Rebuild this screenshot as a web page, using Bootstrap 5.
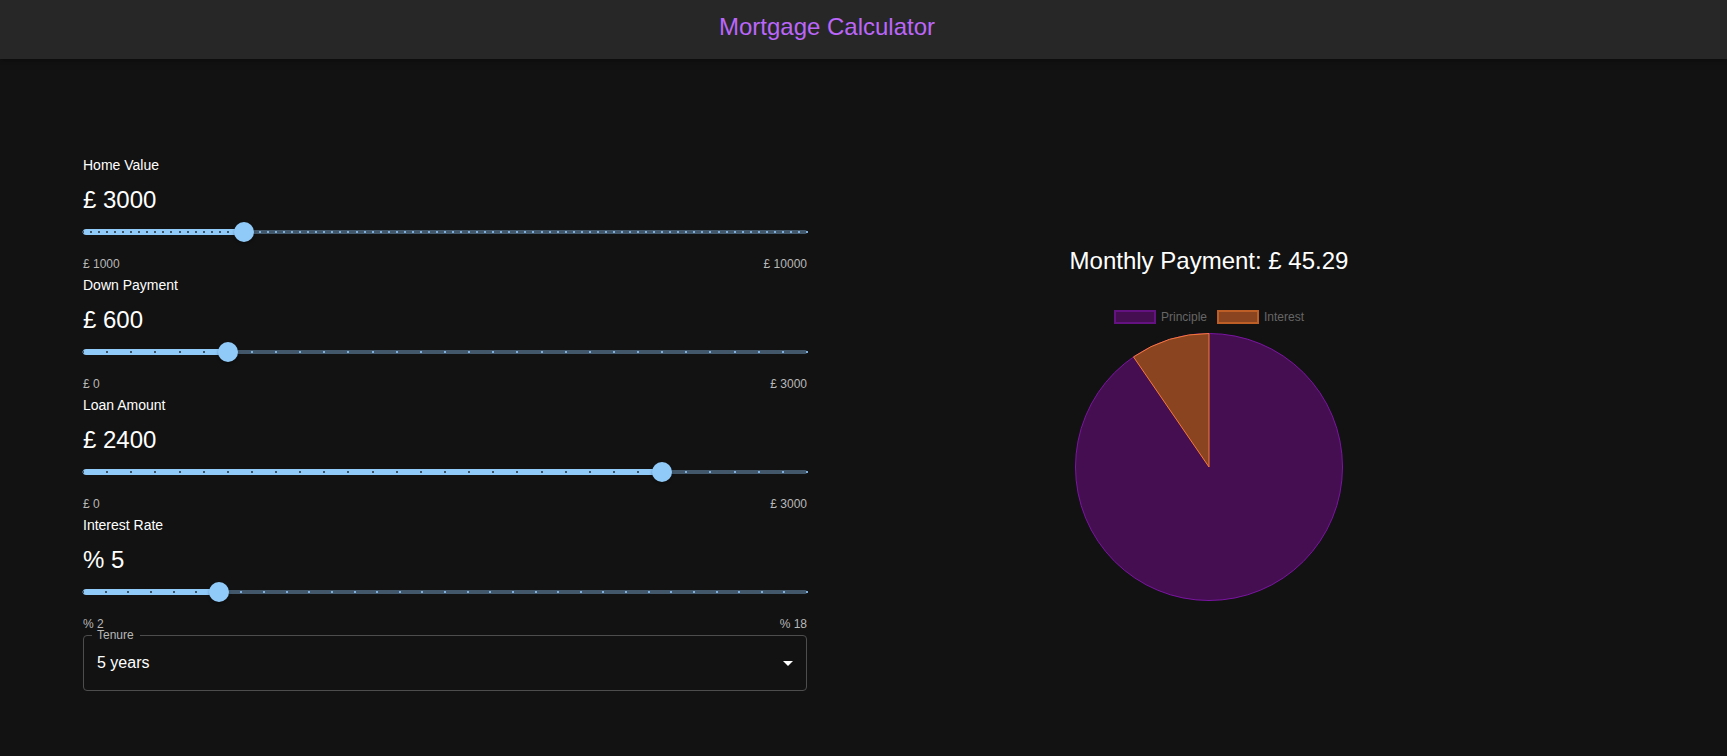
<!DOCTYPE html>
<html lang="en" data-bs-theme="dark">
<head>
<meta charset="utf-8">
<meta name="viewport" content="width=device-width, initial-scale=1">
<title>Mortgage Calculator</title>
<link href="https://cdn.jsdelivr.net/npm/bootstrap@5.3.0/dist/css/bootstrap.min.css" rel="stylesheet">
<style>
  :root { --accent: #90caf9; --page: #121212; --edge: 73px; }
  body { background: var(--page); color: #fff; font-family: "Liberation Sans", Arial, sans-serif; }
  .topbar { background: #272727; padding: 11px 0 16px; box-shadow: 0 2px 4px rgba(0,0,0,.2), 0 4px 8px rgba(0,0,0,.1); }
  .topbar h1 { color: #bb66f9; }
  .big-text { font-size: 24px; line-height: 32px; font-weight: 400; margin: 0; }
  .page-inner { max-width: 1536px; padding: 0 24px; margin: 0 auto; }
  .calc { padding-top: 95px; padding-bottom: 66px; }
  .field-name { font-size: 14px; line-height: 22px; margin-bottom: 8px; display: block; }
  .limits { font-size: 12px; line-height: 20px; margin-top: 6px; color: #b8b8b8; }
  .big-text output { display: inline; }

  .slider { position: relative; height: 32px; }
  .slider .rail, .slider .fill { position: absolute; left: 0; top: 50%; transform: translateY(-50%); border-radius: 12px; }
  .slider .rail { width: 100%; height: 4px; background: var(--accent); opacity: .38; }
  .slider .fill { height: 6px; background: var(--accent); }
  .slider .tick { position: absolute; top: 15px; width: 2px; height: 2px; margin-left: -1px; background: #7faedb; }
  .slider .tick.on { background: #3f5465; }
  .slider input { position: absolute; top: 0; left: -10px; width: calc(100% + 20px); height: 32px; margin: 0; background: transparent; -webkit-appearance: none; appearance: none; }
  .slider input::-webkit-slider-runnable-track { height: 20px; background: transparent; }
  .slider input::-webkit-slider-thumb { -webkit-appearance: none; width: 20px; height: 20px; border-radius: 50%; background: var(--accent); box-shadow: 0 2px 3px rgba(0,0,0,.3); }
  .slider input::-moz-range-thumb { width: 20px; height: 20px; border: 0; border-radius: 50%; background: var(--accent); }

  .tenure { position: relative; padding-top: 1px; }
  /* Only a thin strip of the label is opaque, to cut the notch in the outline */
  .tenure label { position: absolute; left: 9px; top: -8px; padding: 0 6px 0 5px; background: linear-gradient(var(--page), var(--page)) 0 8px / 100% 3px no-repeat; font-size: 12px; line-height: 18px; color: #b8b8b8; }
  .tenure select { appearance: none; width: 100%; height: 56px; padding: 0 32px 0 13px; font-size: 16px; color: #fff; background: transparent; border: 1px solid #4d4d4d; border-radius: 4px; }
  .tenure option { background: #1e1e1e; }
  .tenure svg { position: absolute; right: 7px; top: 17px; pointer-events: none; }

  .key { font-size: 12px; line-height: 14px; color: #666; padding: 9px 0; gap: 10px; }
  .swatch { width: 42px; height: 14px; margin-right: 5px; border: 2px solid; }
  .swatch.p { background: #440e50; border-color: #641182; }
  .swatch.i { background: #8a4520; border-color: #bd5e27; }
  .chart { width: 268px; height: 268px; }
  @media (min-width: 992px) { .offset-edge { padding-right: var(--edge); } }
</style>
</head>
<body>
<header class="topbar offset-edge">
  <div class="page-inner text-center"><h1 class="big-text">Mortgage Calculator</h1></div>
</header>
<main class="calc offset-edge">
  <div class="page-inner">
    <div class="row align-items-center" style="--bs-gutter-x: 40px">
      <form class="col-12 col-lg-6">
        <div>
          <label class="field-name" for="home">Home Value</label>
          <p class="big-text">£ <output for="home">3000</output></p>
          <div class="slider"><input type="range" id="home" min="1000" max="10000" step="100" value="3000"></div>
          <div class="limits d-flex justify-content-between"><span>£ 1000</span><span>£ 10000</span></div>
        </div>
        <div>
          <label class="field-name" for="down">Down Payment</label>
          <p class="big-text">£ <output for="down">600</output></p>
          <div class="slider"><input type="range" id="down" min="0" max="3000" step="100" value="600"></div>
          <div class="limits d-flex justify-content-between"><span>£ 0</span><span>£ 3000</span></div>
        </div>
        <div>
          <label class="field-name" for="loan">Loan Amount</label>
          <p class="big-text">£ <output for="loan">2400</output></p>
          <div class="slider"><input type="range" id="loan" min="0" max="3000" step="100" value="2400"></div>
          <div class="limits d-flex justify-content-between"><span>£ 0</span><span>£ 3000</span></div>
        </div>
        <div>
          <label class="field-name" for="rate">Interest Rate</label>
          <p class="big-text">% <output for="rate">5</output></p>
          <div class="slider"><input type="range" id="rate" min="2" max="18" step="0.5" value="5"></div>
          <div class="limits d-flex justify-content-between"><span>% 2</span><span>% 18</span></div>
        </div>
        <div class="tenure">
          <label for="tenure">Tenure</label>
          <select id="tenure">
            <option selected>5 years</option><option>10 years</option><option>15 years</option><option>20 years</option><option>25 years</option>
          </select>
          <svg width="24" height="24" viewBox="0 0 24 24" fill="#fff" aria-hidden="true"><path d="M7 10l5 5 5-5z"/></svg>
        </div>
      </form>
      <section class="col-12 col-lg-6 d-flex flex-column align-items-center">
        <h2 class="big-text mb-4">Monthly Payment: £ 45.29</h2>
        <div class="key d-flex">
          <span class="d-flex"><span class="swatch p"></span>Principle</span>
          <span class="d-flex"><span class="swatch i"></span>Interest</span>
        </div>
        <svg class="chart" viewBox="-134 -134 268 268" role="img" aria-label="Principle and interest shares">
          <circle r="133.5" fill="#440e50" stroke="#7b14a3"/>
          <path d="M0 0L-75.5 -110.1A133.5 133.5 0 0 1 0 -133.5Z" fill="#8a4520" stroke="#f87838" stroke-linejoin="bevel"/>
        </svg>
      </section>
    </div>
  </div>
</main>
<script src="https://cdn.jsdelivr.net/npm/bootstrap@5.3.0/dist/js/bootstrap.bundle.min.js"></script>
<script>
  // Draws the rail, the filled part and one tick per step under each range input
  document.querySelectorAll('.slider').forEach(function (slider) {
    const input = slider.querySelector('input');
    const min = +input.min, span = input.max - min, count = span / input.step;
    const add = function (name) {
      const el = document.createElement('span');
      el.className = name;
      slider.insertBefore(el, input);
      return el;
    };
    add('rail');
    const fill = add('fill');
    const ticks = [];
    for (let i = 0; i <= count; i++) {
      const tick = add('tick');
      tick.style.left = i / count * 100 + '%';
      ticks.push(tick);
    }
    const update = function () {
      const part = (input.value - min) / span;
      fill.style.width = part * 100 + '%';
      ticks.forEach(function (t, i) { t.classList.toggle('on', i / count <= part); });
      document.querySelector('output[for="' + input.id + '"]').textContent = input.value;
    };
    input.addEventListener('input', update);
    update();
  });
</script>
</body>
</html>
